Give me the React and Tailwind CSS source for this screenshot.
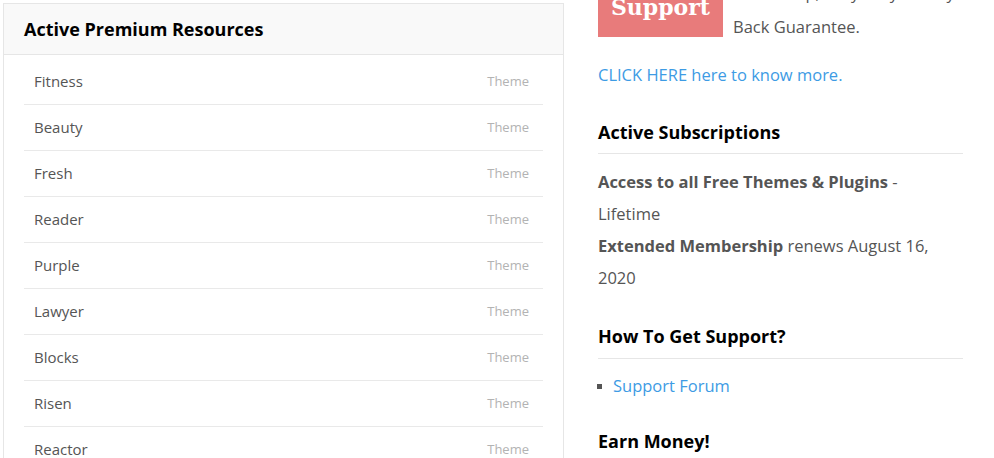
import React from 'react';

const resources = ['Fitness', 'Beauty', 'Fresh', 'Reader', 'Purple', 'Lawyer', 'Blocks', 'Risen', 'Reactor', 'Minimal'];

export default function App() {
  return (
    <div className="h-[458px] w-[994px] overflow-hidden bg-white font-['Open_Sans',sans-serif]">
      <div className="flex items-start pl-[3px] pt-[3px]">
        {/* Resources card */}
        <div className="w-[561px] shrink-0 border border-[#e6e6e6]">
          <div className="flex h-[51px] items-center border-b border-[#e6e6e6] bg-[#f9f9f9] px-[20px]">
            <h2 className="text-[18px] font-bold text-black">Active Premium Resources</h2>
          </div>
          <ul className="px-[20px] pt-[4px]">
            {resources.map((name) => (
              <li
                key={name}
                className="flex h-[46px] items-center justify-between border-b border-[#e9e9e9] pl-[10px] pr-[14px]"
              >
                <span className="text-[15px] text-[#555]">{name}</span>
                <span className="text-[13px] text-[#b3b3b3]">Theme</span>
              </li>
            ))}
          </ul>
        </div>

        {/* Sidebar */}
        <div className="ml-[34px] mt-[-27px] w-[365px] shrink-0 text-[16.5px] text-[#555]">
          <div className="flex items-start">
            <div className="mr-[10px] flex h-[61px] w-[125px] shrink-0 items-end justify-center overflow-hidden bg-[#e87b7b] pb-[19px]">
              <span className="font-['DejaVu_Serif',serif] text-[22px] font-bold leading-[22px] text-white">Support</span>
            </div>
            <p className="leading-[34px]">
              Free Setup, Fully Easy Money Back Guarantee.
            </p>
          </div>

          <p className="mt-[18px] leading-[26px]">
            <a className="text-[#3d9be4]">CLICK HERE here to know more.</a>
          </p>

          <h3 className="mt-[31px] border-b border-[#e6e6e6] pb-[8px] text-[18px] font-bold leading-[26px] text-black">
            Active Subscriptions
          </h3>
          <div className="mt-[12px] leading-[32px]">
            <p>
              <strong className="font-bold">Access to all Free Themes &amp; Plugins</strong> - Lifetime
            </p>
            <p>
              <strong className="font-bold">Extended Membership</strong> renews August 16, 2020
            </p>
          </div>

          <h3 className="mt-[29px] border-b border-[#e6e6e6] pb-[9px] text-[18px] font-bold leading-[26px] text-black">
            How To Get Support?
          </h3>
          <ul className="mt-[14px] leading-[26px]">
            <li className="flex items-center">
              <span className="ml-[-1px] mr-[11px] h-[5px] w-[5px] bg-[#555]" />
              <a className="text-[#3d9be4]">Support Forum</a>
            </li>
          </ul>

          <h3 className="mt-[29px] text-[18px] font-bold leading-[26px] text-black">Earn Money!</h3>
        </div>
      </div>
    </div>
  );
}
